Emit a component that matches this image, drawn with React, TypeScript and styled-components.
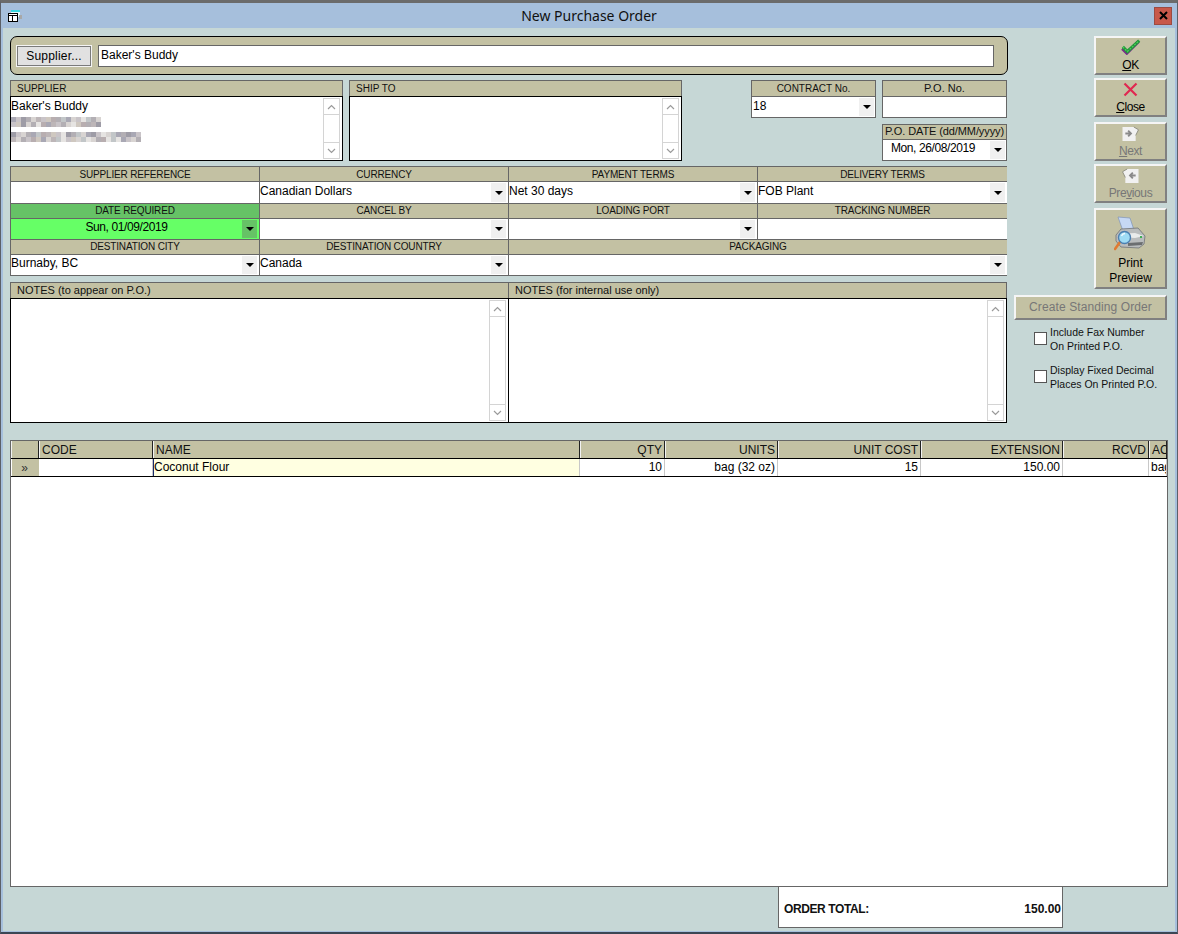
import React from "react"
import styled, { createGlobalStyle } from "styled-components"

const TAN = "#c3c1a3"
const LINE = "#666666"

const GlobalStyle = createGlobalStyle`
  html, body {
    margin: 0;
    padding: 0;
    background: #a6bfdc;
  }
  * {
    box-sizing: border-box;
  }
  body {
    font-family: "Liberation Sans", Arial, sans-serif;
    font-size: 12px;
    color: #000;
  }
`

const Window = styled.div`
  width: 1178px;
  height: 934px;
  display: flex;
  flex-direction: column;
  background: #a6bfdc;
  border: 1px solid #5c6068;
  border-top: 3px solid #6b6b6b;
  border-bottom: 2px solid #3c4654;
  padding: 0 2px 1px;
`

const TitleBar = styled.div`
  height: 25px;
  flex: none;
  display: grid;
  grid-template-columns: 1fr auto 1fr;
  align-items: center;
`

const TitleText = styled.div`
  font-family: "Noto Sans", sans-serif;
  font-size: 14px;
  color: #111;
`

const TitleIconSlot = styled.div`
  display: flex;
  padding-left: 3px;
`

const CloseSlot = styled.div`
  display: flex;
  justify-content: flex-end;
  padding-right: 3px;
`

const WindowClose = styled.div`
  width: 18px;
  height: 18px;
  background: #c8584a;
  border: 1px solid #9c4a42;
  display: flex;
  align-items: center;
  justify-content: center;
`

const Body = styled.div`
  flex: 1;
  min-height: 0;
  background: #c6d7d6;
  padding: 8px 7px 3px;
  display: flex;
  flex-direction: column;
`

const TopRow = styled.div`
  display: flex;
  flex: none;
`

const FormColumn = styled.div`
  width: 998px;
  flex: none;
  display: flex;
  flex-direction: column;
`

const SupplierBar = styled.div`
  height: 39px;
  background: ${TAN};
  border: 1px solid #000;
  border-radius: 7px;
  display: flex;
  align-items: center;
  padding: 0 13px 0 6px;
  gap: 7px;
`

const SupplierButton = styled.div`
  width: 74px;
  height: 20px;
  flex: none;
  background: #e1e1e1;
  border: 1px solid #7a7a7a;
  outline: 1px solid #f4f4f4;
  display: flex;
  align-items: center;
  justify-content: center;
  font-size: 12px;
  letter-spacing: 0.2px;
`

const SupplierName = styled.div`
  flex: 1;
  height: 22px;
  background: #fff;
  border: 1px solid ${LINE};
  padding: 1px 2px;
  line-height: 16px;
`

const ContactRow = styled.div`
  display: flex;
  gap: 6px;
  margin-top: 5px;
  height: 81px;
  padding-right: 1px;
`

const Panel = styled.div`
  width: 333px;
  display: flex;
  flex-direction: column;
`

const PanelHead = styled.div<{ $center?: boolean; $caps?: boolean }>`
  height: 16px;
  flex: none;
  background: ${TAN};
  border: 1px solid ${LINE};
  border-bottom: none;
  font-size: ${(p) => (p.$caps ? "10px" : "11px")};
  line-height: 15px;
  color: #111;
  white-space: nowrap;
  padding: 0 ${(p) => (p.$center ? "0" : "6px")};
  text-align: ${(p) => (p.$center ? "center" : "left")};
`

const TextArea = styled.div`
  flex: 1;
  min-height: 0;
  background: #fff;
  border: 1px solid #000;
  display: flex;
  justify-content: space-between;
  padding: 1px 1px 1px 0;
`

const TextContent = styled.div`
  padding-top: 1px;
  line-height: 15px;
`

const Mosaic = styled.svg`
  display: block;
  margin-top: 3px;
`

const ScrollTrack = styled.div`
  width: 17px;
  flex: none;
  display: flex;
  flex-direction: column;
  justify-content: space-between;
  border: 1px solid #d4d4d4;
  margin: 0 1px 0 0;
`

const ScrollButton = styled.div`
  height: 16px;
  display: flex;
  align-items: center;
  justify-content: center;
  color: #9a9a9a;
  &:first-child {
    border-bottom: 1px solid #d4d4d4;
  }
  &:last-child {
    border-top: 1px solid #d4d4d4;
  }
`

const RefColumn = styled.div`
  margin-left: auto;
  width: 256px;
  display: flex;
  flex-direction: column;
  align-items: flex-end;
`

const RefRow = styled.div`
  display: flex;
  gap: 6px;
`

const RefField = styled.div<{ $mt?: number }>`
  width: 125px;
  display: flex;
  flex-direction: column;
  margin-top: ${(p) => p.$mt || 0}px;
`

const RefValue = styled.div<{ $h: number }>`
  height: ${(p) => p.$h}px;
  background: #fff;
  border: 1px solid ${LINE};
  position: relative;
  line-height: 15px;
  padding: 2px 1px 0;
`

const DateHead = styled(PanelHead)`
  height: 15px;
  line-height: 13px;
  font-size: 11px;
  padding: 0;
  letter-spacing: -0.1px;
`

const DateText = styled.div<{ $pad: number; $up?: number }>`
  text-align: center;
  letter-spacing: -0.4px;
  margin-top: ${(p) => -(p.$up || 0)}px;
  padding-right: ${(p) => p.$pad}px;
`

const ComboButton = styled.div<{ $green?: boolean }>`
  position: absolute;
  right: 1px;
  top: 1px;
  bottom: 1px;
  width: 15px;
  background: ${(p) => (p.$green ? "#66c266" : "#f0f0f0")};
  display: flex;
  align-items: center;
  justify-content: center;
  &::after {
    content: "";
    border-left: 4px solid transparent;
    border-right: 4px solid transparent;
    border-top: 4px solid #000;
  }
`

const DetailCombo = styled(ComboButton)`
  right: 2px;
`

const DetailGrid = styled.div`
  margin-top: 5px;
  width: 997px;
  display: grid;
  grid-template-columns: 249px 249px 249px 250px;
  grid-template-rows: 37px 36px 36px;
  border-right: 1px solid ${LINE};
  border-bottom: 1px solid ${LINE};
`

const DetailCell = styled.div<{ $span?: number }>`
  grid-column: span ${(p) => p.$span || 1};
  display: flex;
  flex-direction: column;
  border-left: 1px solid ${LINE};
  border-top: 1px solid ${LINE};
  min-width: 0;
`

const DetailHead = styled.div<{ $green?: boolean; $first?: boolean }>`
  height: 15px;
  flex: none;
  background: ${(p) => (p.$green ? "#66c266" : TAN)};
  border-bottom: 1px solid ${LINE};
  text-align: center;
  font-size: 10px;
  letter-spacing: -0.15px;
  line-height: ${(p) => (p.$first ? "16px" : "14px")};
  color: #111;
`

const DetailValue = styled.div<{ $green?: boolean; $first?: boolean }>`
  flex: 1;
  position: relative;
  background: ${(p) => (p.$green ? "#66ff66" : "#fff")};
  line-height: 15px;
  padding: ${(p) => (p.$first ? "2px" : "1px")} 0 0;
  min-height: 0;
`

const NotesRow = styled.div`
  margin-top: 6px;
  width: 997px;
  height: 141px;
  display: grid;
  grid-template-columns: 498px 499px;
`

const NotesPanel = styled.div`
  display: flex;
  flex-direction: column;
  min-width: 0;
  &:first-child {
    margin-right: -1px;
  }
`

const Side = styled.div`
  flex: 1;
  display: flex;
  flex-direction: column;
  align-items: flex-end;
  padding-right: 1px;
`

const RaisedButton = styled.div<{ $h: number; $w?: number; $mt: number; $off?: boolean }>`
  width: ${(p) => p.$w || 73}px;
  height: ${(p) => p.$h}px;
  margin-top: ${(p) => p.$mt}px;
  background: ${TAN};
  border: 2px solid;
  border-color: #f5f5f5 #808080 #808080 #f5f5f5;
  display: flex;
  flex-direction: column;
  align-items: center;
  justify-content: flex-end;
  padding-bottom: 1px;
  line-height: 14px;
  font-size: 12px;
  color: ${(p) => (p.$off ? "#777" : "#000")};
  text-align: center;
`

const ButtonIcon = styled.div<{ $gap: number }>`
  display: flex;
  margin-bottom: ${(p) => p.$gap}px;
`

const ButtonLabel = styled.span`
  letter-spacing: -0.4px;
`

const PrintLabel = styled.div`
  font-size: 12px;
  line-height: 15px;
`

const StandingButton = styled(RaisedButton)`
  justify-content: center;
  padding: 0 0 2px;
  letter-spacing: 0.1px;
`

const CheckRow = styled.div<{ $mt: number }>`
  align-self: flex-start;
  margin: ${(p) => p.$mt}px 0 0 26px;
  display: flex;
  align-items: center;
  gap: 3px;
  font-size: 10.5px;
  line-height: 14px;
  color: #111;
`

const CheckBox = styled.div`
  width: 13px;
  height: 13px;
  flex: none;
  background: #fff;
  border: 1px solid #555;
  margin-bottom: 2px;
`

const ItemTable = styled.div`
  margin-top: 17px;
  flex: 1;
  min-height: 0;
  background: #fff;
  border: 1px solid ${LINE};
  overflow: hidden;
`

const TableRow = styled.div<{ $h: number }>`
  display: grid;
  grid-template-columns: 28px 114px 427px 85px 113px 143px 142px 86px 18px;
  height: ${(p) => p.$h}px;
  border-bottom: 1px solid #000;
`

const HeadCell = styled.div<{ $right?: boolean }>`
  background: ${TAN};
  border-right: 1px solid #222;
  border-left: 1px solid #f2f2f2;
  font-size: 12px;
  line-height: 15px;
  padding: 2px 2px 0;
  color: #111;
  white-space: nowrap;
  overflow: hidden;
  text-align: ${(p) => (p.$right ? "right" : "left")};
`

const BodyCell = styled.div<{ $right?: boolean; $yellow?: boolean }>`
  background: ${(p) => (p.$yellow ? "#ffffe1" : "#fff")};
  border-right: 1px solid #c8c8c8;
  border-left: ${(p) => (p.$yellow ? "1px solid #1a2a6a" : "none")};
  line-height: 15px;
  padding: 1px ${(p) => (p.$yellow ? "0" : "2px")} 0;
  white-space: nowrap;
  overflow: hidden;
  text-align: ${(p) => (p.$right ? "right" : "left")};
`

const RowMarker = styled.div`
  background: ${TAN};
  margin-left: 1px;
  padding: 2px 2px 0 0;
  text-align: center;
  font-size: 12px;
  line-height: 15px;
  color: #333;
`

const TotalBox = styled.div`
  flex: none;
  margin-left: 768px;
  width: 285px;
  height: 41px;
  background: #fff;
  border: 1px solid ${LINE};
  border-top: none;
  display: flex;
  justify-content: space-between;
  align-items: center;
  padding: 4px 1px 0 5px;
  font-weight: bold;
  font-size: 12px;
  color: #111;
`

const TotalLabel = styled.span`
  letter-spacing: -0.4px;
`

const mosaicColors = ["#c9c4c8", "#b3afb4", "#d8d4d2", "#a9a8b4", "#cfc8c0", "#bdb6b8", "#e6e4e2", "#9e9ca6", "#c2c6c8", "#b8aeb0"]
const blur1 = [3, 0, 7, 1, 2, 5, 0, 4, 9, 1, 8, 3, 2, 0, 6, 8, 1, 2]
const blur2 = [0, 4, 7, 2, 1, 6, 9, 3, 5, 0, 1, 2, 6, 4, 9, 1, 5, 7]
const blur3 = [7, 0, 2, 1, 3, 8, 9, 5, 4, 0, 6, 7, 1, 8, 2, 3, 7, 0, 6, 2, 8, 3, 1, 7, 3, 0]
const blur4 = [5, 2, 1, 0, 9, 4, 3, 2, 5, 8, 6, 0, 4, 2, 8, 6, 2, 1, 9, 6, 8, 6, 3, 0, 2, 1]

function BlurredAddress() {
  const rows: [number[], number][] = [[blur1, 0], [blur2, 5], [blur3, 15], [blur4, 20]]
  return (
    <Mosaic width="135" height="25" shapeRendering="crispEdges">
      {rows.map(([row, y]) =>
        row.map((c, i) => (
          <rect key={`${y}-${i}`} x={i * 5} y={y} width="5" height="5" fill={mosaicColors[c]} />
        ))
      )}
    </Mosaic>
  )
}

function Scroll() {
  return (
    <ScrollTrack>
      <ScrollButton>
        <svg width="9" height="6" viewBox="0 0 9 6"><path d="M1 5 L4.5 1.5 L8 5" fill="none" stroke="currentColor" strokeWidth="1.2" /></svg>
      </ScrollButton>
      <ScrollButton>
        <svg width="9" height="6" viewBox="0 0 9 6"><path d="M1 1 L4.5 4.5 L8 1" fill="none" stroke="currentColor" strokeWidth="1.2" /></svg>
      </ScrollButton>
    </ScrollTrack>
  )
}

function AppIcon() {
  return (
    <svg width="16" height="14" viewBox="0 0 16 14" shapeRendering="crispEdges">
      <rect x="5" y="1" width="9" height="7" fill="#e8fbfb" />
      <rect x="5" y="1" width="9" height="2" fill="#38d8e0" />
      <rect x="13" y="6" width="3" height="4" fill="#a8a8a8" />
      <rect x="2.5" y="4.5" width="9" height="8" fill="#fff" stroke="#000" />
      <rect x="3" y="6" width="8" height="1" fill="#000" />
      <rect x="6" y="7" width="1" height="5" fill="#000" />
    </svg>
  )
}

function CheckIcon() {
  return (
    <svg width="20" height="17" viewBox="0 0 22 17">
      <path d="M2 10 L7 15 L20 2" fill="none" stroke="#7a2a8a" strokeWidth="3.4" transform="translate(-0.6 0.8)" />
      <path d="M2 9 L7 14 L20 2" fill="none" stroke="#1f9a3a" strokeWidth="3.4" />
      <path d="M2 9 L7 14 L20 2" fill="none" stroke="#52c85c" strokeWidth="1.4" strokeDasharray="2 1.5" />
    </svg>
  )
}

function CrossIcon() {
  return (
    <svg width="15" height="15" viewBox="0 0 15 15">
      <path d="M1.5 1.5 L13.5 13.5 M13.5 1.5 L1.5 13.5" stroke="#e02850" strokeWidth="2.2" />
    </svg>
  )
}

function PageArrow({ back }: { back?: boolean }) {
  return (
    <svg width="17" height="16" viewBox="0 0 17 17" style={{ transform: back ? "scaleX(-1)" : undefined }}>
      <path d="M0 1 H12 L17 4 L14 10 L14 16 H0 Z" fill="#f1f1f1" />
      <path d="M12 1 L17 4 L14 10" fill="none" stroke="#8d8d7f" strokeWidth="1" />
      <path d="M3 8 H8 M6 5 L9 8 L6 11" fill="none" stroke="#8a8a8a" strokeWidth="2" />
    </svg>
  )
}

function PrinterIcon() {
  return (
    <svg width="34" height="36" viewBox="0 0 34 36">
      <path d="M4 1 L16 2 L20 14 L9 15 Z" fill="#c6d8f4" stroke="#7f93b8" strokeWidth="0.7" />
      <path d="M7 13 L24 12 L31 20 L30 28 L25 32 L7 31 L2 25 L2 19 Z" fill="#b9bcbd" stroke="#6f7276" strokeWidth="0.8" />
      <path d="M5 18 L21 17 L30 20 L21 22 L4 21 Z" fill="#e9ebeb" />
      <path d="M14 27 L29 26 L28 29 L14 30 Z" fill="#6b6e70" />
      <rect x="26" y="20" width="2" height="2" fill="#3fae54" />
      <path d="M6 26 L1 33" stroke="#e07a30" strokeWidth="2.6" strokeLinecap="round" />
      <circle cx="10.5" cy="21.5" r="6" fill="#9fdcf5" stroke="#4b7fb0" strokeWidth="1.4" />
      <path d="M7.5 20 A4 4 0 0 1 11 17.5" stroke="#f2fbff" strokeWidth="1.4" fill="none" />
    </svg>
  )
}

export default function App() {
  return (
    <>
      <GlobalStyle />
      <Window>
        <TitleBar>
          <TitleIconSlot><AppIcon /></TitleIconSlot>
          <TitleText>New Purchase Order</TitleText>
          <CloseSlot>
            <WindowClose>
              <svg width="9" height="9" viewBox="0 0 9 9">
                <path d="M1 1 L8 8 M8 1 L1 8" stroke="#000" strokeWidth="2" />
              </svg>
            </WindowClose>
          </CloseSlot>
        </TitleBar>
        <Body>
          <TopRow>
            <FormColumn>
              <SupplierBar>
                <SupplierButton>Supplier...</SupplierButton>
                <SupplierName>Baker's Buddy</SupplierName>
              </SupplierBar>

              <ContactRow>
                <Panel>
                  <PanelHead $caps>SUPPLIER</PanelHead>
                  <TextArea>
                    <TextContent>
                      Baker's Buddy
                      <BlurredAddress />
                    </TextContent>
                    <Scroll />
                  </TextArea>
                </Panel>
                <Panel>
                  <PanelHead $caps>SHIP TO</PanelHead>
                  <TextArea>
                    <TextContent />
                    <Scroll />
                  </TextArea>
                </Panel>
                <RefColumn>
                  <RefRow>
                    <RefField>
                      <PanelHead $center $caps>CONTRACT No.</PanelHead>
                      <RefValue $h={22}>18<ComboButton /></RefValue>
                    </RefField>
                    <RefField>
                      <PanelHead $center>P.O. No.</PanelHead>
                      <RefValue $h={22} />
                    </RefField>
                  </RefRow>
                  <RefField $mt={6}>
                    <DateHead $center>P.O. DATE (dd/MM/yyyy)</DateHead>
                    <RefValue $h={22}>
                      <DateText $pad={23} $up={1}>Mon, 26/08/2019</DateText>
                      <ComboButton />
                    </RefValue>
                  </RefField>
                </RefColumn>
              </ContactRow>

              <DetailGrid>
                <DetailCell>
                  <DetailHead $first>SUPPLIER REFERENCE</DetailHead>
                  <DetailValue $first />
                </DetailCell>
                <DetailCell>
                  <DetailHead $first>CURRENCY</DetailHead>
                  <DetailValue $first>Canadian Dollars<DetailCombo /></DetailValue>
                </DetailCell>
                <DetailCell>
                  <DetailHead $first>PAYMENT TERMS</DetailHead>
                  <DetailValue $first>Net 30 days<DetailCombo /></DetailValue>
                </DetailCell>
                <DetailCell>
                  <DetailHead $first>DELIVERY TERMS</DetailHead>
                  <DetailValue $first>FOB Plant<DetailCombo /></DetailValue>
                </DetailCell>

                <DetailCell>
                  <DetailHead $green>DATE REQUIRED</DetailHead>
                  <DetailValue $green>
                    <DateText $pad={17}>Sun, 01/09/2019</DateText>
                    <DetailCombo $green />
                  </DetailValue>
                </DetailCell>
                <DetailCell>
                  <DetailHead>CANCEL BY</DetailHead>
                  <DetailValue><DetailCombo /></DetailValue>
                </DetailCell>
                <DetailCell>
                  <DetailHead>LOADING PORT</DetailHead>
                  <DetailValue><DetailCombo /></DetailValue>
                </DetailCell>
                <DetailCell>
                  <DetailHead>TRACKING NUMBER</DetailHead>
                  <DetailValue />
                </DetailCell>

                <DetailCell>
                  <DetailHead>DESTINATION CITY</DetailHead>
                  <DetailValue>Burnaby, BC<DetailCombo /></DetailValue>
                </DetailCell>
                <DetailCell>
                  <DetailHead>DESTINATION COUNTRY</DetailHead>
                  <DetailValue>Canada<DetailCombo /></DetailValue>
                </DetailCell>
                <DetailCell $span={2}>
                  <DetailHead>PACKAGING</DetailHead>
                  <DetailValue><DetailCombo /></DetailValue>
                </DetailCell>
              </DetailGrid>

              <NotesRow>
                <NotesPanel>
                  <PanelHead>NOTES (to appear on P.O.)</PanelHead>
                  <TextArea><TextContent /><Scroll /></TextArea>
                </NotesPanel>
                <NotesPanel>
                  <PanelHead>NOTES (for internal use only)</PanelHead>
                  <TextArea><TextContent /><Scroll /></TextArea>
                </NotesPanel>
              </NotesRow>
            </FormColumn>

            <Side>
              <RaisedButton $h={39} $mt={0}>
                <ButtonIcon $gap={3}><CheckIcon /></ButtonIcon>
                <ButtonLabel><u>O</u>K</ButtonLabel>
              </RaisedButton>
              <RaisedButton $h={39} $mt={3}>
                <ButtonIcon $gap={3}><CrossIcon /></ButtonIcon>
                <ButtonLabel><u>C</u>lose</ButtonLabel>
              </RaisedButton>
              <RaisedButton $h={39} $mt={5} $off>
                <ButtonIcon $gap={2}><PageArrow /></ButtonIcon>
                <ButtonLabel><u>N</u>ext</ButtonLabel>
              </RaisedButton>
              <RaisedButton $h={39} $mt={3} $off>
                <ButtonIcon $gap={2}><PageArrow back /></ButtonIcon>
                <ButtonLabel>Pre<u>v</u>ious</ButtonLabel>
              </RaisedButton>
              <RaisedButton $h={81} $mt={5}>
                <ButtonIcon $gap={4}><PrinterIcon /></ButtonIcon>
                <PrintLabel>Print<br />Preview</PrintLabel>
              </RaisedButton>
              <StandingButton $h={25} $w={153} $mt={6} $off>Create Standing Order</StandingButton>
              <CheckRow $mt={5}>
                <CheckBox />
                <div>Include Fax Number<br />On Printed P.O.</div>
              </CheckRow>
              <CheckRow $mt={10}>
                <CheckBox />
                <div>Display Fixed Decimal<br />Places On Printed P.O.</div>
              </CheckRow>
            </Side>
          </TopRow>

          <ItemTable>
            <TableRow $h={18}>
              <HeadCell />
              <HeadCell>CODE</HeadCell>
              <HeadCell>NAME</HeadCell>
              <HeadCell $right>QTY</HeadCell>
              <HeadCell $right>UNITS</HeadCell>
              <HeadCell $right>UNIT COST</HeadCell>
              <HeadCell $right>EXTENSION</HeadCell>
              <HeadCell $right>RCVD</HeadCell>
              <HeadCell>AC</HeadCell>
            </TableRow>
            <TableRow $h={18}>
              <RowMarker>»</RowMarker>
              <BodyCell />
              <BodyCell $yellow>Coconut Flour</BodyCell>
              <BodyCell $right>10</BodyCell>
              <BodyCell $right>bag (32 oz)</BodyCell>
              <BodyCell $right>15</BodyCell>
              <BodyCell $right>150.00</BodyCell>
              <BodyCell />
              <BodyCell>bag</BodyCell>
            </TableRow>
          </ItemTable>

          <TotalBox>
            <TotalLabel>ORDER TOTAL:</TotalLabel>
            <span>150.00</span>
          </TotalBox>
        </Body>
      </Window>
    </>
  )
}
